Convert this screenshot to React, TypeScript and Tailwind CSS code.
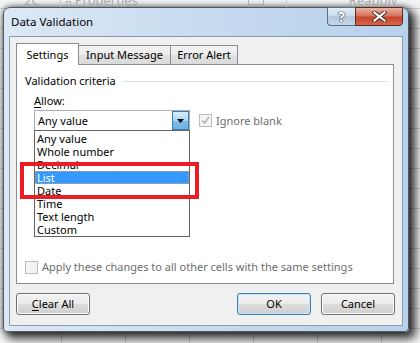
import React from 'react';

const allowItems = ['Any value', 'Whole number', 'Decimal', 'List', 'Date', 'Time', 'Text length', 'Custom'];

function Checkbox({ checked }: { checked?: boolean }) {
  return (
    <span className="w-[13px] h-[13px] shrink-0 border border-[#bcbcbc] bg-[#f4f4f4] flex items-center justify-center">
      {checked && (
        <svg width="9" height="9" viewBox="0 0 9 9">
          <path d="M1 4.5 L3.5 7 L8 1" fill="none" stroke="#b3b3b3" strokeWidth="1.6" />
        </svg>
      )}
    </span>
  );
}

function DialogButton({ children, primary }: { children: React.ReactNode; primary?: boolean }) {
  return (
    <button
      className={`w-[74px] h-[22px] rounded-[3px] border text-black bg-[linear-gradient(to_bottom,#f2f2f2,#ebebeb_50%,#dddddd_50%,#cfcfcf)] ${
        primary ? 'border-[#3c7fb1] shadow-[inset_0_0_0_1px_#c4e5f6]' : 'border-[#707070] shadow-[inset_0_0_0_1px_#fcfcfc]'
      }`}
    >
      {children}
    </button>
  );
}

export default function App() {
  return (
    <div className="relative w-[420px] h-[343px] overflow-hidden bg-[#f7f7f7] bg-[linear-gradient(to_right,#d2d2d2_1px,transparent_1px),linear-gradient(to_bottom,#d2d2d2_1px,transparent_1px)] bg-size-[64px_20px] bg-position-[61px_8px] font-['Noto_Sans',sans-serif] text-[11px] leading-[16px] text-black">
      {/* ribbon remains above the dialog */}
      <div className="h-[7px] overflow-hidden bg-[#f1f3f5] flex items-start text-[#a8a8a8]">
        <span className="ml-[24px] -mt-[6px] text-[13px] leading-[13px]">2C</span>
        <span className="ml-[20px] w-px h-[7px] bg-[#c8c8c8]" />
        <span className="ml-[5px] mt-[1px] w-[5px] h-[5px] border border-[#b0b0b0]" />
        <span className="ml-[4px] -mt-[6px] text-[13px] leading-[13px]">Properties</span>
        <span className="ml-[110px] w-[16px] h-[5px] border border-[#b0b0b0] border-t-0" />
        <span className="ml-[22px] w-px h-[7px] bg-[#c8c8c8]" />
        <span className="ml-[62px] -mt-[6px] text-[13px] leading-[13px]">Reapply</span>
      </div>

      <div className="ml-[3px] w-[406px] h-[325px] rounded-t-[7px] rounded-b-[4px] border border-[#4f5966] bg-[linear-gradient(to_right,#dce8f5,#c3d8ef_60%,#b8d1ec)] shadow-[0_0_5px_1px_rgba(0,0,0,0.4),5px_5px_10px_2px_rgba(0,0,0,0.75)] flex flex-col px-[5px] pb-[5px]">
        {/* title bar */}
        <div className="h-[28px] flex items-start justify-between">
          <span className="pl-[2px] pt-[6px] text-[11.5px]">Data Validation</span>
          <div className="flex -mt-px">
            <div className="w-[28px] h-[19px] border border-[#5e6f82] border-r-0 rounded-bl-[4px] bg-[linear-gradient(to_bottom,#e4eef8,#c9d9ea_50%,#b3c7dc_50%,#c4d6ea)] flex items-center justify-center text-white font-bold text-[14px] leading-none [text-shadow:0_0_1px_#2b3540,0_0_1px_#2b3540,0_0_1px_#2b3540]">
              ?
            </div>
            <div className="w-[48px] h-[19px] border border-[#5b2a20] rounded-br-[4px] bg-[linear-gradient(to_bottom,#eab1a4,#d7745e_45%,#c7442a_55%,#d8654a)] flex items-center justify-center">
              <svg width="15" height="11" viewBox="0 0 15 11">
                <path d="M2.5 1.5 L12.5 9.5 M12.5 1.5 L2.5 9.5" stroke="#3b2a28" strokeWidth="4" strokeLinecap="square" />
                <path d="M2.5 1.5 L12.5 9.5 M12.5 1.5 L2.5 9.5" stroke="#ffffff" strokeWidth="2.2" strokeLinecap="square" />
              </svg>
            </div>
          </div>
        </div>

        {/* client area */}
        <div className="flex-1 border border-[#8d9cad] bg-[#f0f0f0] flex flex-col pl-[6px] pt-[6px]">
          {/* tabs */}
          <div className="flex items-end h-[21px]">
            <div className="relative z-10 w-[63px] h-[22px] -mb-px border border-b-0 border-[#898c95] bg-white flex items-center justify-center">
              Settings
            </div>
            <div className="w-[92px] h-[19px] border-t border-r border-[#898c95] bg-[linear-gradient(to_bottom,#f3f3f3,#ececec_50%,#e1e1e1_50%,#dadada)] flex items-center justify-center">
              Input Message
            </div>
            <div className="w-[67px] h-[19px] border-t border-r border-[#898c95] bg-[linear-gradient(to_bottom,#f3f3f3,#ececec_50%,#e1e1e1_50%,#dadada)] flex items-center justify-center">
              Error Alert
            </div>
          </div>

          {/* tab panel */}
          <div className="w-[378px] h-[220px] border border-[#898c95] bg-white flex flex-col">
            <div className="mt-[8px] pl-[8px] pr-[6px] h-[16px] flex items-center">
              <span>Validation criteria</span>
              <span className="flex-1 ml-[7px] h-px bg-[#d5dfe5]" />
            </div>
            <div className="mt-[4px] pl-[17px] h-[16px]">
              <span className="underline underline-offset-2">A</span>llow:
            </div>
            <div className="mt-[1px] pl-[17px] flex items-center">
              <div className="relative w-[156px] h-[21px] border border-[#abadb3] bg-white flex items-center">
                <span className="flex-1 pl-[3px]">Any value</span>
                <span className="w-[17px] h-[19px] border border-[#3c7fb1] bg-[linear-gradient(to_bottom,#d7eefb,#a9d6f3_50%,#7fbbe6_50%,#6fb0e2)] flex items-center justify-center">
                  <svg width="7" height="4" viewBox="0 0 7 4">
                    <path d="M0 0 H7 L3.5 4 Z" fill="#000" />
                  </svg>
                </span>

                {/* open dropdown list */}
                <div className="absolute left-[-1px] top-full z-20 w-[156px] border border-[#646464] bg-white pt-[1px]">
                  {allowItems.map((item) => (
                    <div
                      key={item}
                      className={`h-[13px] leading-[13px] pl-[2px] ${
                        item === 'List' ? 'bg-[#3399ff] text-white outline-1 outline-dotted outline-[#d8a460] -outline-offset-1' : ''
                      }`}
                    >
                      {item}
                    </div>
                  ))}
                </div>
              </div>
              <div className="ml-[9px] flex items-center gap-[4px] text-[#6d6d6d]">
                <Checkbox checked />
                <span>Ignore blank</span>
              </div>
            </div>

            <div className="mt-auto mb-[8px] pl-[8px] h-[16px] flex items-center gap-[4px] text-[#6d6d6d]">
              <Checkbox />
              <span>Apply these changes to all other cells with the same settings</span>
            </div>
          </div>

          {/* buttons */}
          <div className="mt-[9px] w-[379px] flex">
            <DialogButton>
              <span className="underline underline-offset-2">C</span>lear All
            </DialogButton>
            <div className="ml-auto flex gap-[10px]">
              <DialogButton primary>OK</DialogButton>
              <DialogButton>Cancel</DialogButton>
            </div>
          </div>
        </div>
      </div>

      {/* red highlight annotation */}
      <div className="absolute left-[20px] top-[162px] w-[179px] h-[37px] border-[4px] border-[#ec1c24] z-30 pointer-events-none" />
    </div>
  );
}
